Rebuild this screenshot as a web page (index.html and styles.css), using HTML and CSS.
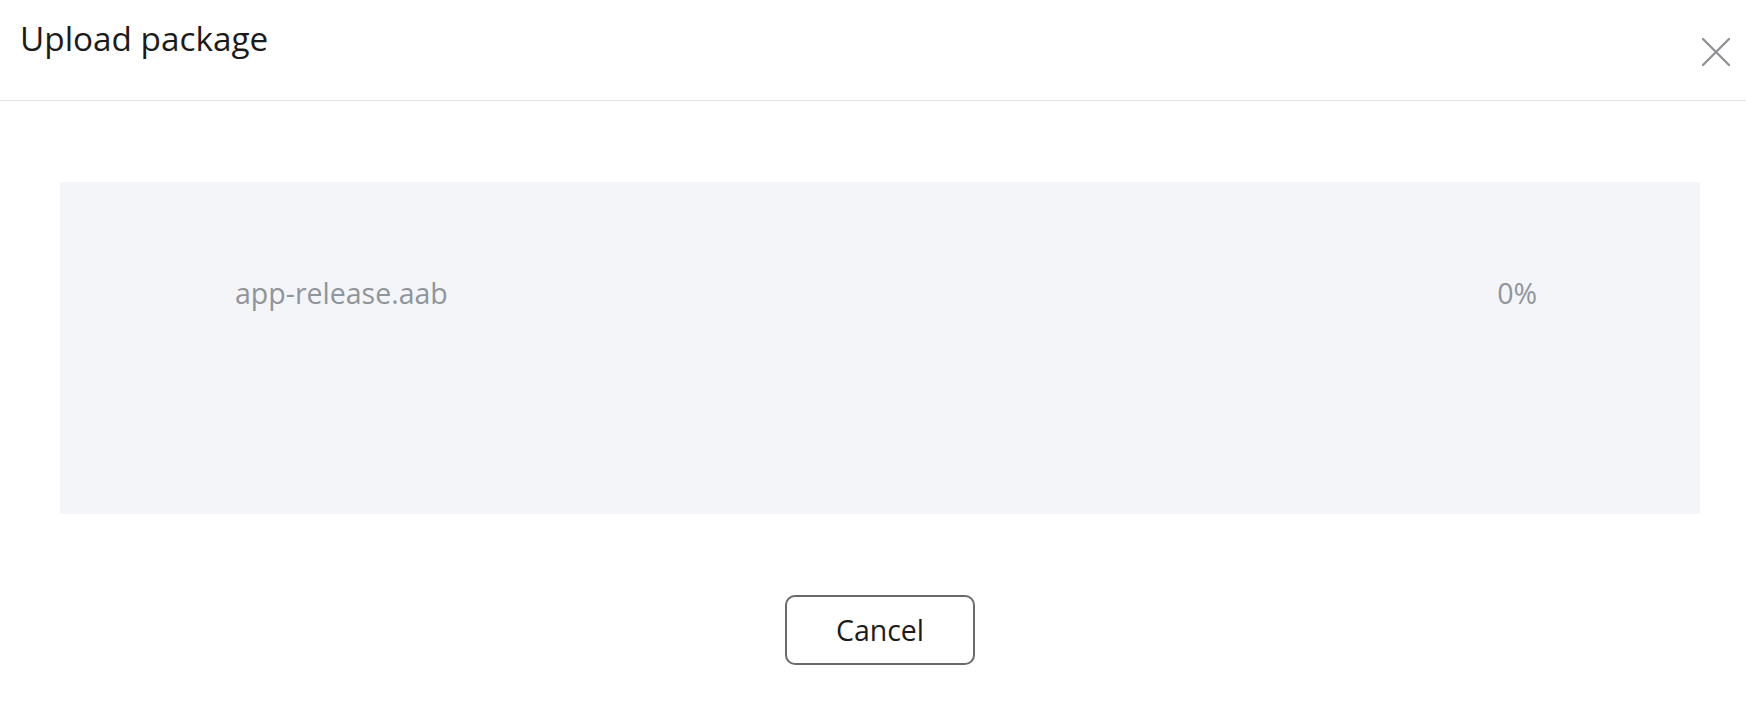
FILE: index.html
```html
<!DOCTYPE html>
<html lang="en">
<head>
<meta charset="utf-8">
<title>Upload package</title>
<link rel="stylesheet" href="styles.css">
</head>
<body>
<div class="dialog">
  <header class="dialog-header">
    <h1 class="dialog-title">Upload package</h1>
    <button class="close-btn" aria-label="Close">
      <svg width="28" height="28" viewBox="0 0 28 28"><path d="M1 1 L27 27 M27 1 L1 27" stroke="#8c8e92" stroke-width="2.2" stroke-linecap="round" fill="none"/></svg>
    </button>
  </header>
  <main class="dialog-body">
    <div class="upload-box">
      <div class="upload-row">
        <span class="file-name">app-release.aab</span>
        <span class="file-progress">0%</span>
      </div>
    </div>
    <div class="actions">
      <button class="cancel-btn">Cancel</button>
    </div>
  </main>
</div>
</body>
</html>
```
FILE: styles.css
```css
html, body {
  margin: 0;
  padding: 0;
  background: #ffffff;
}
body {
  font-family: "Open Sans", "Noto Sans", sans-serif;
  color: #1b1b1b;
}
.dialog {
  width: 1746px;
  height: 702px;
  overflow: hidden;
}
.dialog-header {
  display: flex;
  justify-content: space-between;
  align-items: flex-start;
  height: 101px;
  box-sizing: border-box;
  padding: 18px 16px 0 20px;
  border-bottom: 1px solid #e2e2e4;
}
.dialog-title {
  margin: 0;
  font-size: 33.3px;
  line-height: 40px;
  font-weight: 400;
  color: #1b1b1b;
}
.close-btn {
  margin-top: 20px;
  padding: 0;
  border: none;
  background: none;
  width: 28px;
  height: 28px;
  display: block;
}
.close-btn svg {
  display: block;
}
.dialog-body {
  padding: 81px 46px 0 60px;
}
.upload-box {
  height: 332px;
  background: #f4f5f9;
  box-sizing: border-box;
  padding: 92px 163px 0 175px;
}
.upload-row {
  display: flex;
  justify-content: space-between;
  font-size: 28.5px;
  line-height: 38px;
  color: #8f959b;
}
.actions {
  display: flex;
  justify-content: center;
  padding-top: 81px;
}
.cancel-btn {
  width: 190px;
  height: 70px;
  box-sizing: border-box;
  border: 2px solid #6a6a6a;
  border-radius: 10px;
  background: #ffffff;
  font-family: "Open Sans", "Noto Sans", sans-serif;
  font-size: 28.5px;
  color: #1b1b1b;
  padding: 0;
}
```
